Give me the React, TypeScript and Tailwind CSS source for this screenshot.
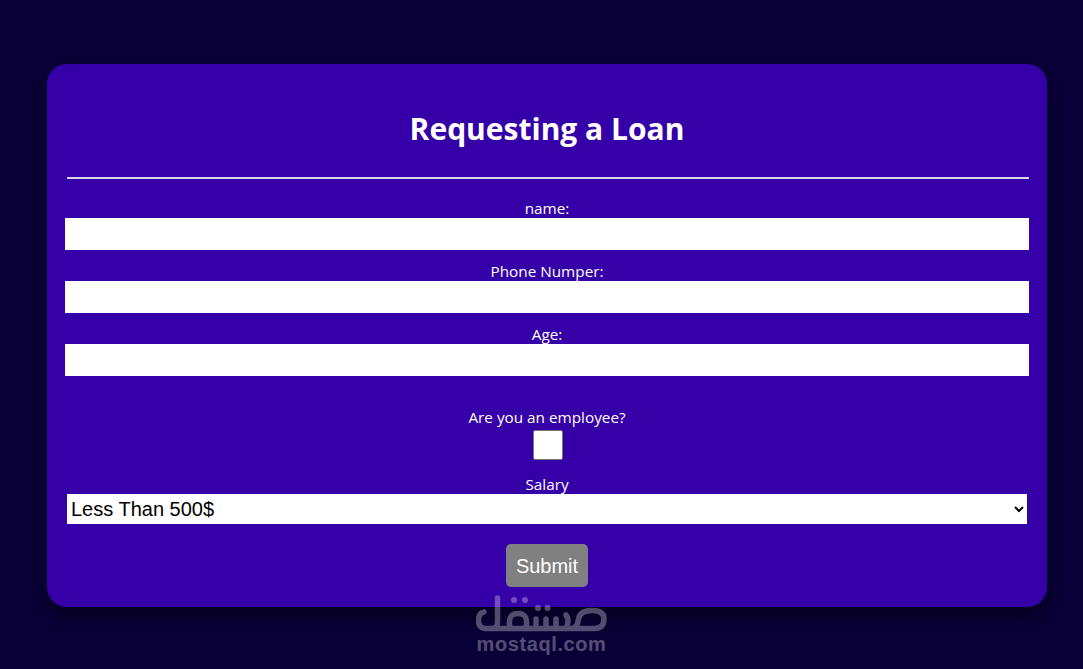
export default function App() {
  const font = "font-['Open_Sans','Noto_Sans',sans-serif]";
  return (
    <div className={`relative min-h-[669px] overflow-hidden bg-[#090037] pt-16 text-white ${font}`}>
      <form className="ml-[47px] flex h-[543px] w-[1000px] flex-col items-center rounded-[20px] bg-[#3500a8] px-[18px] shadow-[0_10px_20px_rgba(0,0,0,0.4)]">
        <h1 className="mt-[43px] text-[30px] leading-[44px] font-bold">Requesting a Loan</h1>
        <hr className="mt-[26px] ml-[2px] h-[2px] w-[962px] border-0 bg-[#d8d4e8]" />
        <label className="mt-[20px] text-[15.3px] leading-[19px]">name:</label>
        <input className="h-8 w-[964px] shrink-0 bg-white" />
        <label className="mt-[12px] text-[15.3px] leading-[19px]">Phone Numper:</label>
        <input className="h-8 w-[964px] shrink-0 bg-white" />
        <label className="mt-[12px] text-[15.3px] leading-[19px]">Age:</label>
        <input className="h-8 w-[964px] shrink-0 bg-white" />
        <label className="mt-[32px] text-[15.3px] leading-[19px]">Are you an employee?</label>
        <div className="mt-[3px] ml-[2px] h-[30px] w-[30px] rounded-[2px] border border-[#767676] bg-white" />
        <label className="mt-[15px] text-[15.3px] leading-[19px]">Salary</label>
        <select className="h-[30px] w-[960px] shrink-0 bg-white font-['Liberation_Sans',sans-serif] text-[20px] text-black [appearance:auto]">
          <option>Less Than 500$</option>
        </select>
        <button type="button" className="mt-5 h-[43px] w-[82px] rounded-[5px] bg-[#808080] font-['Liberation_Sans',sans-serif] text-[20px] text-white">Submit</button>
      </form>
      <div className="pointer-events-none absolute top-[595px] left-[476px] flex w-[131px] flex-col items-center opacity-30">
        <svg width="131" height="38" viewBox="0 0 131 38" fill="none" stroke="#fff" strokeWidth="5.5" strokeLinecap="round" strokeLinejoin="round">
          <path d="M8 17Q2.5 18 2.5 25.5 2.5 33.5 10 33.5H16Q21.5 33.5 21.5 27V3" />
          <path d="M16 33.5H118Q128 33.5 128 24 128 15.5 116 15.5 104 15.5 102.5 24 101.5 33.5 95 33.5" />
          <path d="M34 33.5Q31 18.5 42 18.5 53 18.5 50 33.5" />
          <path d="M60 33.5V24M70 33.5V24M80 33.5V24M90 33.5Q94 25 90 20" />
          <path strokeWidth="6" d="M38 5h.01M49 5h.01M62 13h.01M71.5 13h.01" />
        </svg>
        <span className="font-['Liberation_Sans',sans-serif] text-[20px] leading-[22px] font-bold tracking-[0.6px] whitespace-nowrap text-white">mostaql.com</span>
      </div>
    </div>
  );
}
